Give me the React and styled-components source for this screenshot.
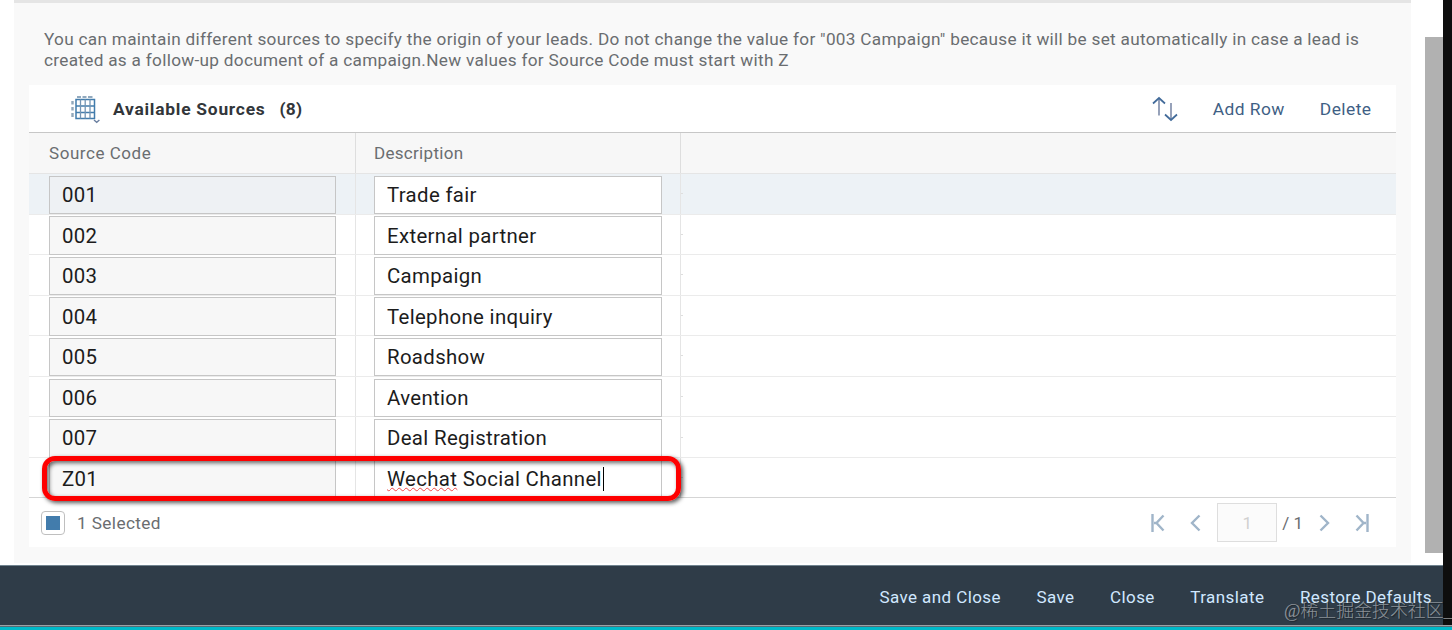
import React, { useState } from 'react'
import styled, { createGlobalStyle } from 'styled-components'

const initialSources = [
  { code: '001', description: 'Trade fair' },
  { code: '002', description: 'External partner' },
  { code: '003', description: 'Campaign' },
  { code: '004', description: 'Telephone inquiry' },
  { code: '005', description: 'Roadshow' },
  { code: '006', description: 'Avention' },
  { code: '007', description: 'Deal Registration' },
  { code: 'Z01', description: 'Social Channel', misspelled: 'Wechat', editing: true },
]

const footerActions = ['Save and Close', 'Save', 'Close', 'Translate', 'Restore Defaults']

function TableIcon() {
  return (
    <svg width="31" height="30" viewBox="0 0 31 30" fill="none">
      <path d="M5 5.500h18.500v19H5zM5 12h18.500M5 18.500h18.500" stroke="#427cac" strokeWidth="1.500" />
      <path d="M9.500 5.500v19M14.200 5.500v19M19 5.500v19" stroke="#7595b3" strokeWidth="1.300" />
      <path d="M6 3h4M11.500 3h4M17 3h4.500" stroke="#6d8da9" strokeWidth="1.600" />
      <path d="M1.500 7v3.500M1.500 13v3.500M1.500 19v4" stroke="#91a7ba" strokeWidth="2.400" />
      <path d="M23 26l2.700 2.300 2.700-2.300" stroke="#6a7fa0" strokeWidth="1.400" />
    </svg>
  )
}

function SortIcon() {
  return (
    <svg width="26" height="26" viewBox="0 0 26 26" fill="none" strokeWidth="1.700">
      <path d="M7 19.500V2M19 7v17" stroke="#8592ae" />
      <path d="M1 7.500l6-5.500 6 5.500M13 18.500l6 5.500 6-5.500" stroke="#426b9a" />
    </svg>
  )
}

function App() {
  const [sources] = useState(initialSources)

  return (
    <>
      <GlobalStyle />
      <Screen>
        <Main>
          <Page>
            <Panel>
              <Intro>
                <IntroLine>
                  You can maintain different sources to specify the origin of your leads. Do not change the value for "003 Campaign" because it will be set automatically in case a lead is
                </IntroLine>
                <IntroLine>created as a follow-up document of a campaign.New values for Source Code must start with Z</IntroLine>
              </Intro>
              <TableCard>
                <Toolbar>
                  <TableIcon />
                  <Title>Available Sources</Title>
                  <Title>({sources.length})</Title>
                  <Spacer />
                  <SortIcon />
                  <ToolbarButton>Add Row</ToolbarButton>
                  <ToolbarButton>Delete</ToolbarButton>
                </Toolbar>
                <HeaderRow>
                  <HeaderCell $first>Source Code</HeaderCell>
                  <HeaderCell>Description</HeaderCell>
                </HeaderRow>
                {sources.map((source, index) => (
                  <Row key={source.code} $selected={index === 0} $last={index === sources.length - 1}>
                    <Cell $first>
                      <Field $readOnly $selected={index === 0}>
                        {source.code}
                      </Field>
                    </Cell>
                    <Cell>
                      <Field>
                        {source.misspelled && <Misspelled>{source.misspelled}</Misspelled>}
                        {source.misspelled && '\u00a0'}
                        {source.description}
                        {source.editing && <Caret />}
                      </Field>
                    </Cell>
                    <Filler />
                  </Row>
                ))}
                <Pager>
                  <CheckBox>
                    <CheckMark />
                  </CheckBox>
                  <PagerText>1 Selected</PagerText>
                  <Spacer />
                  <PagerNav>
                    <svg width="14" height="18" viewBox="0 0 14 18">
                      <path d="M1.500 0v18M12.500 1.500L5.500 9l7 7.500M3 9h3" />
                    </svg>
                    <svg width="11" height="18" viewBox="0 0 11 18">
                      <path d="M9.500 1.500L2 9l7.500 7.500" />
                    </svg>
                    <PageInput>1</PageInput>
                    <PageTotal>/ 1</PageTotal>
                    <svg width="11" height="18" viewBox="0 0 11 18">
                      <path d="M1.500 1.500L9 9l-7.500 7.500" />
                    </svg>
                    <svg width="14" height="18" viewBox="0 0 14 18">
                      <path d="M12.500 0v18M1.500 1.500l7 7.500-7 7.500M11 9H8" />
                    </svg>
                  </PagerNav>
                </Pager>
                <Highlight />
              </TableCard>
            </Panel>
            <ScrollBar>
              <ScrollThumb />
            </ScrollBar>
          </Page>
          <Footer>
            {footerActions.map((action) => (
              <FooterButton key={action}>{action}</FooterButton>
            ))}
          </Footer>
        </Main>
        <Edge />
        <BottomStrip />
        <Watermark>@稀土掘金技术社区_</Watermark>
      </Screen>
    </>
  )
}

export default App

const GlobalStyle = createGlobalStyle`
  * {
    box-sizing: border-box;
  }
  body {
    margin: 0;
    overflow: hidden;
    background: #fff;
    font-family: Roboto, 'Liberation Sans', sans-serif;
  }
  button {
    padding: 0;
    border: none;
    background: none;
    font-family: inherit;
    white-space: nowrap;
    cursor: pointer;
  }
`

const Screen = styled.div`
  position: relative;
  display: grid;
  grid-template-columns: 1443px 9px;
  grid-template-rows: 625px 5px;
  width: 1452px;
  height: 630px;
`

const Main = styled.div`
  display: flex;
  flex-direction: column;
`

const Edge = styled.div`
  background: #0e0e0e;
`

const BottomStrip = styled.div`
  grid-column: 1 / -1;
  background: #00b9c9;
  border-top: 1px solid #9ba2a6;
  box-shadow: inset 0 1px 0 #546b75;
`

const Page = styled.div`
  display: flex;
  justify-content: space-between;
  height: 565px;
  padding-left: 14px;
`

const Panel = styled.div`
  width: 1397px;
  height: 563px;
  padding: 0 15px;
  border-top: 3px solid #e5e5e5;
  background: #f9f9f9;
`

const Intro = styled.div`
  height: 82px;
  padding: 25.5px 0 0 15px;
`

const IntroLine = styled.div`
  height: 21px;
  line-height: 21px;
  color: #6a6d70;
  font-size: 17.2px;
  white-space: nowrap;
  letter-spacing: 0.3px;
`

const TableCard = styled.div`
  position: relative;
  height: 462px;
  background: #fff;
`

const Toolbar = styled.div`
  display: flex;
  align-items: center;
  height: 48px;
  padding: 0 24.5px 0 42px;
  border-bottom: 1px solid #c7c7c7;
`

const Title = styled.div`
  margin-left: 11px;
  color: #32363a;
  font-size: 17.4px;
  font-weight: 700;
  letter-spacing: 0.75px;
  & + & {
    margin-left: 14px;
    letter-spacing: 0.2px;
  }
`

const Spacer = styled.div`
  flex: 1;
`

const ToolbarButton = styled.button`
  margin-left: 35px;
  color: #3f5f85;
  font-size: 17.4px;
  letter-spacing: 0.45px;
`

const HeaderRow = styled.div`
  display: flex;
  height: 41px;
  background: #f7f7f7;
  border-bottom: 1px solid #e5e5e5;
`

const HeaderCell = styled.div`
  display: flex;
  align-items: center;
  width: ${(props) => (props.$first ? 327 : 325)}px;
  padding-left: ${(props) => (props.$first ? 20 : 18)}px;
  border-right: 1px solid #dedede;
  color: #6a6d70;
  font-size: 17px;
  letter-spacing: ${(props) => (props.$first ? 0.55 : 0.3)}px;
`

const Row = styled.div`
  display: flex;
  height: 40.55px;
  background: ${(props) => (props.$selected ? '#edf2f6' : '#fff')};
  border-bottom: 1px solid ${(props) => (props.$last ? '#d5d5d5' : '#ebebeb')};
`

const Cell = styled.div`
  width: ${(props) => (props.$first ? 327 : 325)}px;
  padding: 1.8px 0 0 ${(props) => (props.$first ? 20 : 18)}px;
  border-right: 1px solid #e5e5e5;
`

const Filler = styled.div`
  align-self: center;
  width: 2px;
  height: 1px;
  background: #dedede;
`

const Field = styled.div`
  display: flex;
  align-items: center;
  width: ${(props) => (props.$readOnly ? 287 : 288)}px;
  height: 38.5px;
  padding-left: 12px;
  border: 1px solid #c6c6c6;
  background: ${(props) => (props.$selected ? '#eef1f4' : props.$readOnly ? '#f7f7f7' : '#fff')};
  color: #1c1c1c;
  font-size: 20.4px;
  letter-spacing: 0.34px;
  white-space: nowrap;
`

const Misspelled = styled.span`
  text-decoration: underline wavy #f04a4a 1px;
  text-underline-offset: 1px;
  text-decoration-skip-ink: none;
`

const Caret = styled.span`
  width: 1px;
  height: 24px;
  margin-left: 1px;
  background: #000;
`

const Pager = styled.div`
  display: flex;
  align-items: center;
  height: 49px;
  padding: 0 27px 0 12px;
`

const CheckBox = styled.div`
  display: flex;
  align-items: center;
  justify-content: center;
  width: 24px;
  height: 24px;
  border: 1px solid #bfbfbf;
  border-radius: 4px;
`

const CheckMark = styled.div`
  width: 14px;
  height: 14px;
  background: #427cac;
`

const PagerText = styled.div`
  margin-left: 12px;
  color: #6a6d70;
  font-size: 17.2px;
  letter-spacing: 0.4px;
`

const PagerNav = styled.div`
  display: flex;
  align-items: center;
  svg {
    fill: none;
    stroke: #a0b5c9;
    stroke-width: 2.4;
  }
  svg + svg {
    margin-left: 25px;
  }
`

const PageInput = styled.div`
  width: 60px;
  height: 39px;
  margin-left: 16px;
  border: 1px solid #dedede;
  background: #fbfbfb;
  color: #d0d0d0;
  font-size: 17px;
  line-height: 38px;
  text-align: center;
`

const PageTotal = styled.div`
  margin: 0 16px 0 5px;
  color: #6a6d70;
  font-size: 17px;
  white-space: nowrap;
`

/* red call-out drawn over the newly added row */
const Highlight = styled.div`
  position: absolute;
  left: 13px;
  top: 371px;
  width: 639px;
  height: 45px;
  border: 5px solid #fe0000;
  border-radius: 13px;
  box-shadow: 2px 2px 4px rgba(0, 0, 0, 0.65), inset 2px 2px 4px rgba(0, 0, 0, 0.6);
`

const ScrollBar = styled.div`
  width: 18px;
  padding-top: 37px;
`

const ScrollThumb = styled.div`
  height: 516px;
  background: #b1b1b1;
`

const Footer = styled.div`
  display: flex;
  align-items: center;
  justify-content: flex-end;
  gap: 35.5px;
  height: 60px;
  padding: 2px 11px 0 0;
  border-top: 1px solid #70838f;
  background: #2f3c48;
`

const FooterButton = styled.button`
  color: #d1e8ff;
  font-size: 17px;
  letter-spacing: 0.42px;
`

const Watermark = styled.div`
  position: absolute;
  left: 1284px;
  top: 599px;
  color: rgba(255, 255, 255, 0.48);
  font-family: 'Liberation Serif', 'Noto Sans CJK SC', sans-serif;
  font-size: 17.9px;
  font-weight: 300;
  line-height: 24px;
  text-shadow: 1px 1px 1px rgba(0, 0, 0, 0.4);
  white-space: nowrap;
`
